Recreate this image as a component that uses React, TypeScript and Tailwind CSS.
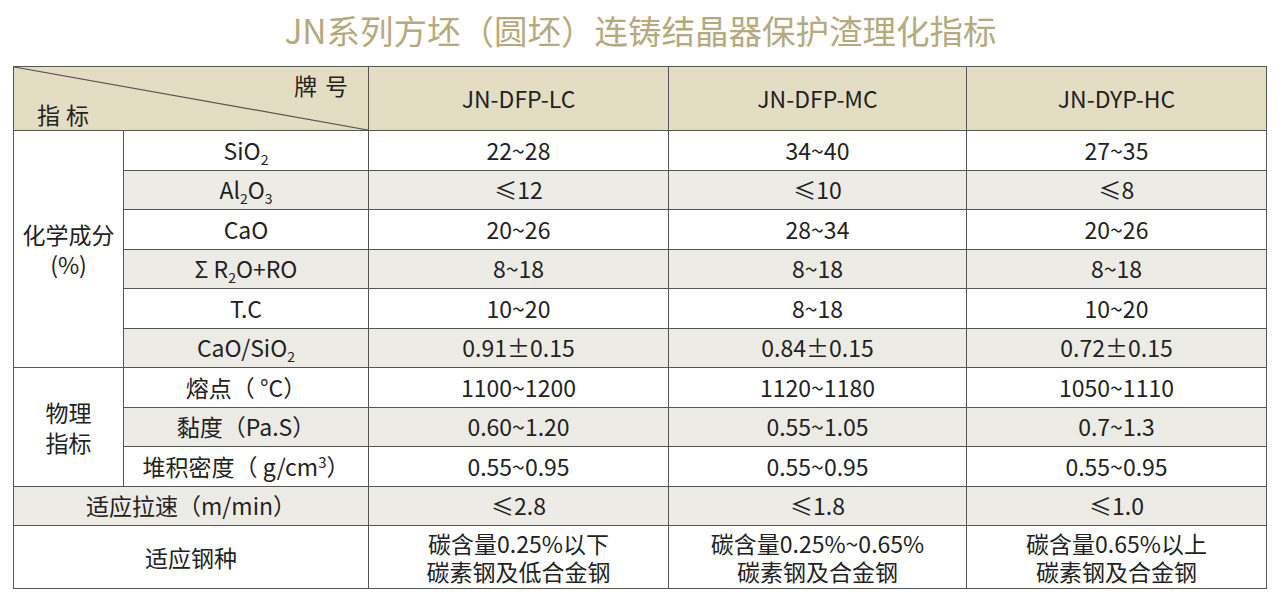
import React from 'react';

const font = { fontFamily: '"Noto Sans CJK SC", "Noto Sans", sans-serif' };

interface Row {
  label: React.ReactNode;
  values: React.ReactNode[];
  shaded?: boolean;
}

const Sub: React.FC<{ children: React.ReactNode }> = ({ children }) => (
  <sub className="text-[14px] -bottom-[5px]">{children}</sub>
);

const chem: Row[] = [
  { label: <>SiO<Sub>2</Sub></>, values: ['22~28', '34~40', '27~35'] },
  { label: <>Al<Sub>2</Sub>O<Sub>3</Sub></>, values: ['≤12', '≤10', '≤8'], shaded: true },
  { label: 'CaO', values: ['20~26', '28~34', '20~26'] },
  { label: <>Σ R<Sub>2</Sub>O+RO</>, values: ['8~18', '8~18', '8~18'], shaded: true },
  { label: 'T.C', values: ['10~20', '8~18', '10~20'] },
  { label: <>CaO/SiO<Sub>2</Sub></>, values: ['0.91±0.15', '0.84±0.15', '0.72±0.15'], shaded: true },
];

const phys: Row[] = [
  { label: '熔点（ °C）', values: ['1100~1200', '1120~1180', '1050~1110'] },
  { label: '黏度（Pa.S）', values: ['0.60~1.20', '0.55~1.05', '0.7~1.3'], shaded: true },
  { label: <>堆积密度（ g/cm<sup className="text-[15px]">3</sup>）</>, values: ['0.55~0.95', '0.55~0.95', '0.55~0.95'] },
];

const cell = 'border border-[#555] text-center align-middle p-0';

const DataRows: React.FC<{ group: React.ReactNode; rows: Row[] }> = ({ group, rows }) => (
  <>
    {rows.map((r, i) => (
      <tr key={i} className="h-[39.5px]">
        {i === 0 && (
          <td rowSpan={rows.length} className={`${cell} bg-white leading-[30px]`}>
            {group}
          </td>
        )}
        <td className={`${cell} ${r.shaded ? 'bg-[#edebe6]' : 'bg-white'}`}>{r.label}</td>
        {r.values.map((v, j) => (
          <td key={j} className={`${cell} ${r.shaded ? 'bg-[#edebe6]' : 'bg-white'}`}>
            {v}
          </td>
        ))}
      </tr>
    ))}
  </>
);

const App: React.FC = () => {
  return (
    <div className="w-[1281px] h-[608px] bg-white text-[#222]" style={font}>
      <div className="h-[66px] pb-[6px] flex items-center justify-center">
        <h1 className="text-[33.5px] leading-none text-[#b5aa7d] font-normal">
          JN系列方坯（圆坯）连铸结晶器保护渣理化指标
        </h1>
      </div>

      <table className="ml-[13px] w-[1253px] table-fixed border-collapse border border-[#777] text-[23px] leading-none">
        <colgroup>
          <col className="w-[110px]" />
          <col className="w-[245px]" />
          <col className="w-[300px]" />
          <col className="w-[298px]" />
          <col className="w-[300px]" />
        </colgroup>
        <thead>
          <tr className="h-[63px] bg-[#e3dec3]">
            <th colSpan={2} className="relative border border-[#555] p-0 font-normal">
              <svg
                className="absolute inset-0 w-full h-full"
                viewBox="0 0 100 100"
                preserveAspectRatio="none"
              >
                <line x1="0" y1="0" x2="100" y2="100" stroke="#555" strokeWidth="1.2" vectorEffect="non-scaling-stroke" />
              </svg>
              <div className="relative flex flex-col h-[63px] justify-between">
                <div className="self-end pr-[12px] pt-[7px] tracking-[8px]">牌号</div>
                <div className="self-start pl-[23px] pb-[4px] tracking-[6px]">指标</div>
              </div>
            </th>
            <th className={`${cell} font-normal`}>JN-DFP-LC</th>
            <th className={`${cell} font-normal`}>JN-DFP-MC</th>
            <th className={`${cell} font-normal`}>JN-DYP-HC</th>
          </tr>
        </thead>
        <tbody>
          <DataRows
            group={
              <>
                化学成分
                <br />
                (%)
              </>
            }
            rows={chem}
          />
          <DataRows
            group={
              <>
                物理
                <br />
                指标
              </>
            }
            rows={phys}
          />
          <tr className="h-[39.5px] bg-[#edebe6]">
            <td colSpan={2} className={cell}>适应拉速（m/min）</td>
            <td className={cell}>≤2.8</td>
            <td className={cell}>≤1.8</td>
            <td className={cell}>≤1.0</td>
          </tr>
          <tr className="h-[63px] bg-white">
            <td colSpan={2} className={cell}>适应钢种</td>
            <td className={`${cell} leading-[28px]`}>
              碳含量0.25%以下
              <br />
              碳素钢及低合金钢
            </td>
            <td className={`${cell} leading-[28px]`}>
              碳含量0.25%~0.65%
              <br />
              碳素钢及合金钢
            </td>
            <td className={`${cell} leading-[28px]`}>
              碳含量0.65%以上
              <br />
              碳素钢及合金钢
            </td>
          </tr>
        </tbody>
      </table>
    </div>
  );
};

export default App;
